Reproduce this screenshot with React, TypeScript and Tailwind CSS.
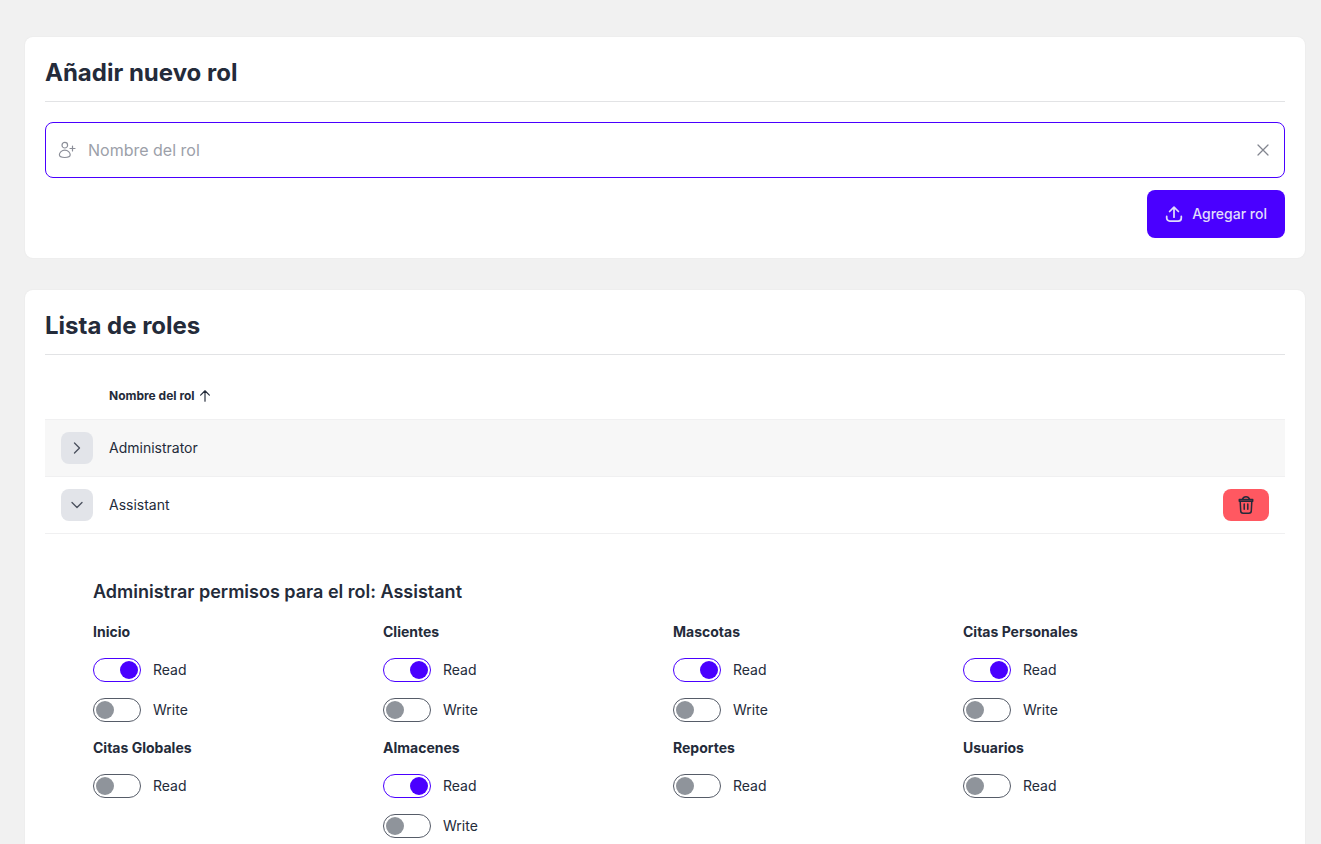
import React, { useState } from 'react';
import { HiOutlineArrowUp, HiOutlineChevronDown, HiOutlineChevronRight, HiOutlineXMark } from 'react-icons/hi2';

interface Permission {
  module: string;
  read: boolean;
  write?: boolean;
}

interface Role {
  name: string;
  removable: boolean;
  permissions: Permission[];
}

const roles: Role[] = [
  { name: 'Administrator', removable: false, permissions: [] },
  {
    name: 'Assistant',
    removable: true,
    permissions: [
      { module: 'Inicio', read: true, write: false },
      { module: 'Clientes', read: true, write: false },
      { module: 'Mascotas', read: true, write: false },
      { module: 'Citas Personales', read: true, write: false },
      { module: 'Citas Globales', read: false },
      { module: 'Almacenes', read: true, write: false },
      { module: 'Reportes', read: false },
      { module: 'Usuarios', read: false },
    ],
  },
];

function UserPlusIcon({ className }: { className?: string }) {
  return (
    <svg
      className={className}
      viewBox="0 0 18 18"
      fill="none"
      stroke="currentColor"
      strokeWidth={1.2}
      strokeLinecap="round"
      strokeLinejoin="round"
    >
      <circle cx="6.8" cy="4.2" r="2.8" />
      <path d="M6.8 9.2c3 0 5.4 2.2 5.4 4.6 0 1.8-1.8 2.7-5.4 2.7s-5.4-.9-5.4-2.7c0-2.4 2.4-4.6 5.4-4.6z" />
      <path d="M14.5 5v5M12 7.5h5" />
    </svg>
  );
}

function UploadIcon({ className }: { className?: string }) {
  return (
    <svg
      className={className}
      viewBox="0 0 18 18"
      fill="none"
      stroke="currentColor"
      strokeWidth={1.75}
      strokeLinecap="round"
      strokeLinejoin="round"
    >
      <path d="M9 12.2V2.2M4.6 6.5 9 2.1l4.4 4.4" />
      <path d="M1.7 11.4V13a3 3 0 0 0 3 3h8.6a3 3 0 0 0 3-3v-1.6" />
    </svg>
  );
}

function TrashIcon({ className }: { className?: string }) {
  return (
    <svg
      className={className}
      viewBox="0 0 20 20"
      fill="none"
      stroke="currentColor"
      strokeWidth={1.5}
      strokeLinecap="round"
      strokeLinejoin="round"
    >
      <path d="M6.5 4.2C7 2.6 8 1.8 10 1.8s3 .8 3.5 2.4" />
      <path d="M3.3 4.5h13.4v1.8H3.300z" />
      <path d="M4.200 6.500l.5 9.300a2.500 2.500 0 0 0 2.500 2.500h5.600a2.500 2.500 0 0 0 2.500-2.500l.5-9.300" />
      <path d="M8.200 9v5.200M11.800 9v5.200" />
    </svg>
  );
}

function Card({ title, children }: { title: string; children: React.ReactNode }) {
  return (
    <section className="rounded-lg bg-white p-5 shadow-[0_0_2px_0_rgba(0,0,0,0.06)]">
      <h2 className="border-b border-[#e2e3e5] pb-3 text-2xl font-bold">{title}</h2>
      {children}
    </section>
  );
}

function Toggle({ label, defaultChecked }: { label: string; defaultChecked: boolean }) {
  return (
    <label className="flex h-6 cursor-pointer items-center gap-3">
      <input
        type="checkbox"
        defaultChecked={defaultChecked}
        className="h-6 w-12 cursor-pointer appearance-none rounded-full border border-[#565c68] p-0.5 before:block before:size-[18px] before:rounded-full before:bg-[#8f949b] before:transition-transform checked:border-[#4a00ff] checked:before:translate-x-6 checked:before:bg-[#4a00ff]"
      />
      <span>{label}</span>
    </label>
  );
}

function Permissions({ role }: { role: Role }) {
  return (
    <div className="px-12 pt-11 pb-8">
      <h3 className="mb-4 text-lg font-semibold">Administrar permisos para el rol: {role.name}</h3>
      <div className="grid grid-cols-4 gap-4">
        {role.permissions.map((permission) => (
          <div key={permission.module} className="flex flex-col gap-4">
            <h4 className="font-bold">{permission.module}</h4>
            <Toggle label="Read" defaultChecked={permission.read} />
            {permission.write !== undefined && <Toggle label="Write" defaultChecked={permission.write} />}
          </div>
        ))}
      </div>
    </div>
  );
}

export default function App() {
  const [name, setName] = useState('');
  const [expanded, setExpanded] = useState<string | null>('Assistant');

  return (
    <main className="min-h-screen space-y-8 bg-[#f1f1f1] pt-[37px] pr-4 pb-8 pl-[25px] font-['Inter',sans-serif] text-[#242b3a]">
      <Card title="Añadir nuevo rol">
        <form onSubmit={(e) => e.preventDefault()} className="mt-5">
          <div className="flex h-14 items-center rounded-lg border border-[#4a00ff] pr-[11px] pl-3">
            <UserPlusIcon className="size-[18px] shrink-0 text-[#8b8e98]" />
            <input
              type="text"
              aria-label="Nombre del rol"
              placeholder="Nombre del rol"
              value={name}
              onChange={(e) => setName(e.target.value)}
              className="min-w-0 flex-1 px-3 text-base outline-none placeholder:text-[#9ca0a9]"
            />
            <button type="button" aria-label="Limpiar" onClick={() => setName('')} className="text-[#82858f]">
              <HiOutlineXMark className="size-5" />
            </button>
          </div>
          <div className="mt-3 flex justify-end">
            <button
              type="submit"
              className="flex h-12 items-center gap-[9px] rounded-lg bg-[#4a00ff] px-[18px] text-sm font-medium text-[#e0dcfb]"
            >
              <UploadIcon className="size-[18px]" />
              Agregar rol
            </button>
          </div>
        </form>
      </Card>

      <Card title="Lista de roles">
        <table className="mt-4 w-full border-collapse text-left text-sm">
          <thead>
            <tr className="h-12">
              <th className="w-16" />
              <th className="pt-0.5 text-xs font-bold">
                <span className="flex items-center gap-[3px]">
                  Nombre del rol
                  <HiOutlineArrowUp className="size-[14px] stroke-2" />
                </span>
              </th>
              <th />
            </tr>
          </thead>
          <tbody>
            {roles.map((role) => {
              const open = expanded === role.name;
              return (
                <React.Fragment key={role.name}>
                  <tr className={role.removable ? 'border-y border-[#f0f0f1]' : 'border-y border-[#f0f0f1] bg-[#f7f7f7]'}>
                    <td className="py-3 pl-4">
                      <button
                        type="button"
                        aria-label={`Permisos de ${role.name}`}
                        aria-expanded={open}
                        onClick={() => setExpanded(open ? null : role.name)}
                        className="flex size-8 items-center justify-center rounded-lg bg-[#e2e4e9] text-[#4b515e]"
                      >
                        {open ? (
                          <HiOutlineChevronDown className="size-4 stroke-2" />
                        ) : (
                          <HiOutlineChevronRight className="size-4 stroke-2" />
                        )}
                      </button>
                    </td>
                    <td>{role.name}</td>
                    <td className="pr-4">
                      {role.removable && (
                        <button
                          type="button"
                          aria-label={`Eliminar ${role.name}`}
                          className="ml-auto flex h-8 w-[46px] items-center justify-center rounded-lg bg-[#ff5861]"
                        >
                          <TrashIcon className="size-5" />
                        </button>
                      )}
                    </td>
                  </tr>
                  {open && (
                    <tr>
                      <td colSpan={3}>
                        <Permissions role={role} />
                      </td>
                    </tr>
                  )}
                </React.Fragment>
              );
            })}
          </tbody>
        </table>
      </Card>
    </main>
  );
}
